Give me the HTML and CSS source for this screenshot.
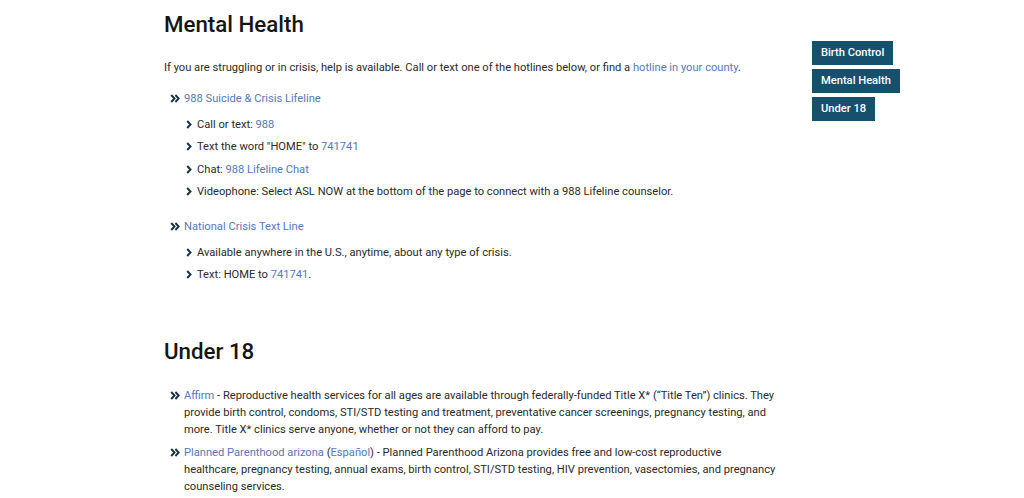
FILE: index.html
```html
<!DOCTYPE html>
<html lang="en">
<head>
<meta charset="utf-8">
<title>Mental Health</title>
<link rel="stylesheet" href="styles.css">
</head>
<body>
<div class="page">
  <main class="content">
    <section class="mental">
      <h2 class="title">Mental Health</h2>
      <p class="intro">If you are struggling or in crisis, help is available. Call or text one of the hotlines below, or find a <a href="#">hotline in your county</a>.</p>
      <ul class="list">
        <li class="item">
          <svg class="dchev" viewBox="0 0 10 9" width="10" height="9"><path d="M1.2 1l3.3 3.5L1.2 8M5.4 1l3.3 3.5L5.4 8"/></svg>
          <div class="body">
            <a href="#">988 Suicide &amp; Crisis Lifeline</a>
            <ul class="sublist">
              <li class="subitem"><svg class="schev" viewBox="0 0 6 9" width="6" height="9"><path d="M1.2 1l3.3 3.5L1.2 8"/></svg><span>Call or text: <a href="#">988</a></span></li>
              <li class="subitem"><svg class="schev" viewBox="0 0 6 9" width="6" height="9"><path d="M1.2 1l3.3 3.5L1.2 8"/></svg><span>Text the word "HOME" to <a href="#">741741</a></span></li>
              <li class="subitem"><svg class="schev" viewBox="0 0 6 9" width="6" height="9"><path d="M1.2 1l3.3 3.5L1.2 8"/></svg><span>Chat: <a href="#">988 Lifeline Chat</a></span></li>
              <li class="subitem"><svg class="schev" viewBox="0 0 6 9" width="6" height="9"><path d="M1.2 1l3.3 3.5L1.2 8"/></svg><span>Videophone: Select ASL NOW at the bottom of the page to connect with a 988 Lifeline counselor.</span></li>
            </ul>
          </div>
        </li>
        <li class="item item-gap">
          <svg class="dchev" viewBox="0 0 10 9" width="10" height="9"><path d="M1.2 1l3.3 3.5L1.2 8M5.4 1l3.3 3.5L5.4 8"/></svg>
          <div class="body">
            <a href="#">National Crisis Text Line</a>
            <ul class="sublist">
              <li class="subitem"><svg class="schev" viewBox="0 0 6 9" width="6" height="9"><path d="M1.2 1l3.3 3.5L1.2 8"/></svg><span>Available anywhere in the U.S., anytime, about any type of crisis.</span></li>
              <li class="subitem"><svg class="schev" viewBox="0 0 6 9" width="6" height="9"><path d="M1.2 1l3.3 3.5L1.2 8"/></svg><span>Text: HOME to <a href="#">741741</a>.</span></li>
            </ul>
          </div>
        </li>
      </ul>
    </section>
    <section class="under">
      <h2 class="title">Under 18</h2>
      <ul class="list list-under">
        <li class="item">
          <svg class="dchev" viewBox="0 0 10 9" width="10" height="9"><path d="M1.2 1l3.3 3.5L1.2 8M5.4 1l3.3 3.5L5.4 8"/></svg>
          <div class="body"><a href="#">Affirm</a> - Reproductive health services for all ages are available through federally-funded Title X* (“Title Ten”) clinics. They provide birth control, condoms, STI/STD testing and treatment, preventative cancer screenings, pregnancy testing, and more. Title X* clinics serve anyone, whether or not they can afford to pay.</div>
        </li>
        <li class="item item-small">
          <svg class="dchev" viewBox="0 0 10 9" width="10" height="9"><path d="M1.2 1l3.3 3.5L1.2 8M5.4 1l3.3 3.5L5.4 8"/></svg>
          <div class="body"><a href="#">Planned Parenthood arizona</a> (<a href="#">Español</a>) - Planned Parenthood Arizona provides free and low-cost reproductive healthcare, pregnancy testing, annual exams, birth control, STI/STD testing, HIV prevention, vasectomies, and pregnancy counseling services.</div>
        </li>
      </ul>
    </section>
  </main>
  <aside class="sidebar">
    <a class="tag" href="#">Birth Control</a>
    <a class="tag" href="#">Mental Health</a>
    <a class="tag" href="#">Under 18</a>
  </aside>
</div>
</body>
</html>
```

FILE: styles.css
```css
* { box-sizing: border-box; }
html, body { margin: 0; padding: 0; background: #fff; }
body {
  font-family: Roboto, "Liberation Sans", Arial, sans-serif;
  font-size: 11.15px;
  line-height: 17px;
  color: #2a2a2a;
}
a { color: #5878b8; text-decoration: none; }

.page {
  display: flex;
  align-items: flex-start;
  padding: 10px 0 0 164px;
}
.content { width: 614px; flex: none; }

.title {
  margin: 0;
  font-size: 22.3px;
  line-height: 28px;
  font-weight: 500;
  color: #151515;
}
.intro { margin: 21px 0 0; }

.list { list-style: none; margin: 14px 0 0; padding: 0; }
.item { display: flex; align-items: flex-start; }
.item-gap { margin-top: 18px; }
.item-small { margin-top: 6px; }
.dchev {
  flex: none;
  margin: 4px 4px 0 6px;
  fill: none;
  stroke: #1f3442;
  stroke-width: 2;
}
.body { flex: 1; min-width: 0; }

.sublist { list-style: none; margin: 8.5px 0 0; padding: 0; }
.subitem { display: flex; align-items: flex-start; margin-top: 5.5px; }
.schev {
  flex: none;
  margin: 4px 5px 0 2px;
  fill: none;
  stroke: #1f3442;
  stroke-width: 2;
}

.under { margin-top: 54px; }
.list-under { margin-top: 22px; }

.sidebar {
  margin-left: 34px;
  margin-top: 31px;
  display: flex;
  flex-direction: column;
  align-items: flex-start;
  gap: 4px;
}
.tag {
  display: block;
  background: #17506d;
  color: #fff;
  font-size: 11.15px;
  font-weight: 500;
  line-height: 24px;
  padding: 0 9px;
}
```
